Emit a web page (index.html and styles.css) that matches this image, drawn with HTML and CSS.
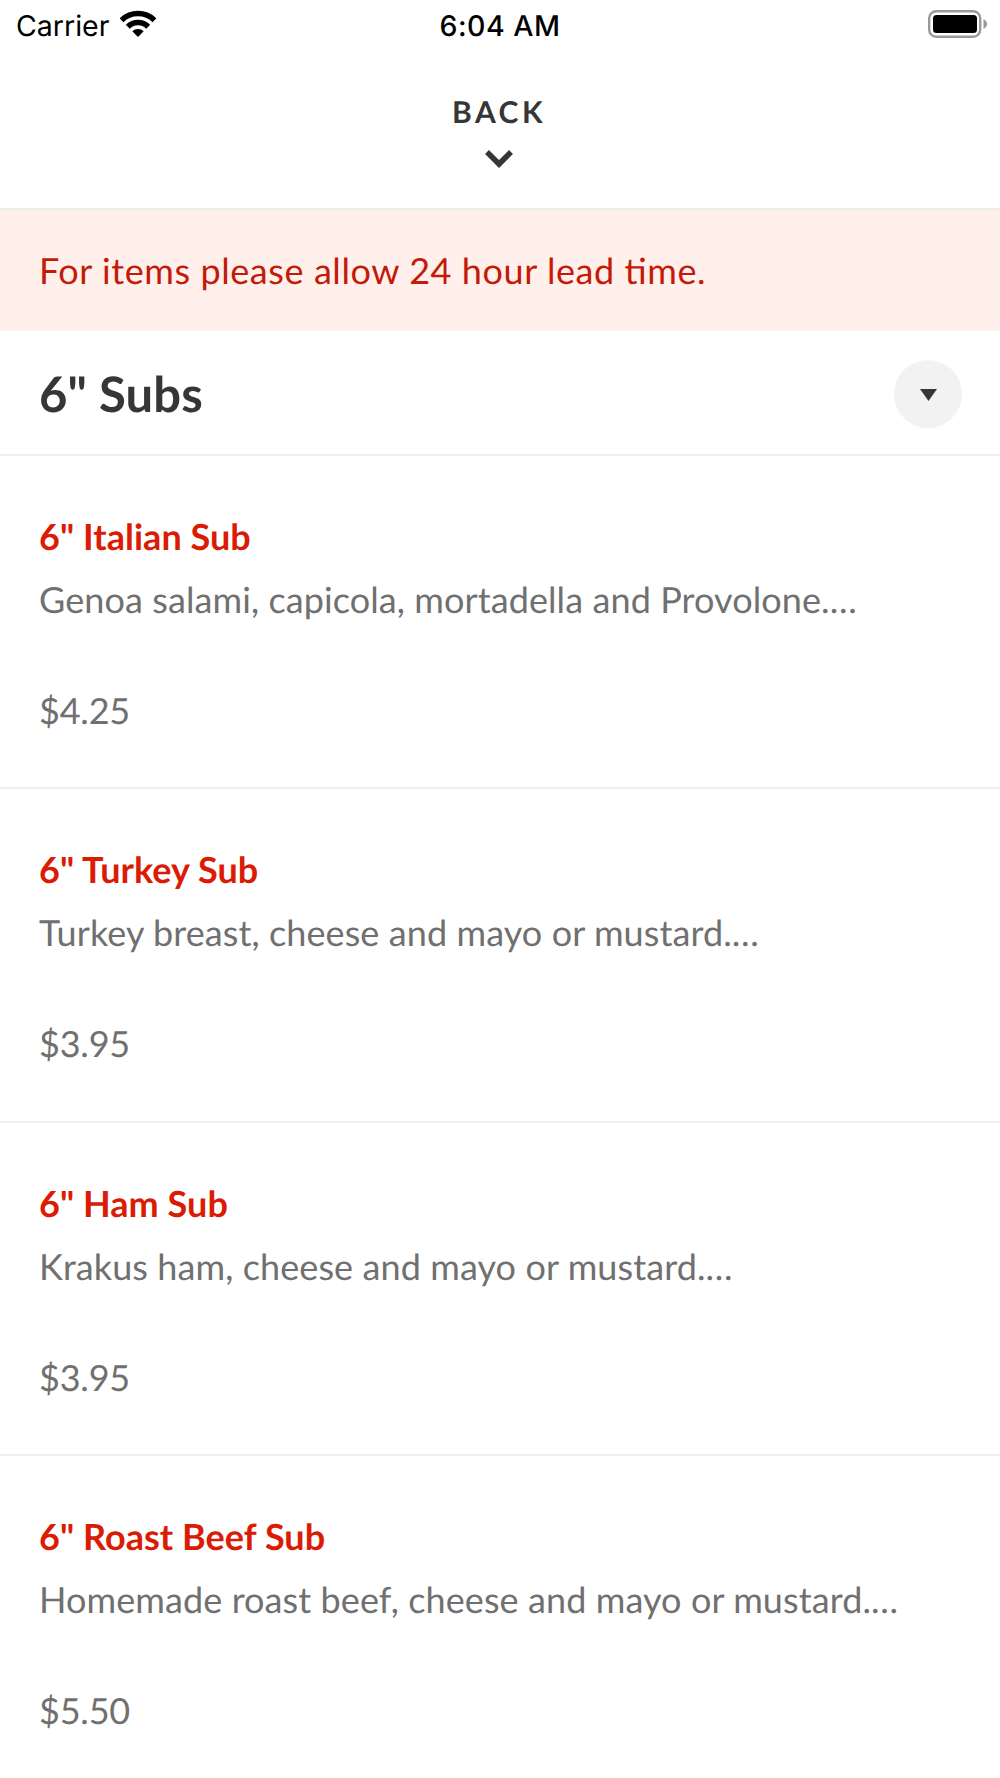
FILE: index.html
```html
<!DOCTYPE html>
<html lang="en">
<head>
<meta charset="utf-8">
<title>Menu</title>
<link rel="stylesheet" href="styles.css">
</head>
<body>
<header class="status">
  <div class="carrier"><span>Carrier</span>
    <svg class="wifi" width="36" height="28" viewBox="0 0 36 28"><path d="M18 27 12.300 21.300a8.300 8.300 0 0 1 11.400 0Z"/><path class="arc" d="M7.800 16.800a14.500 14.500 0 0 1 20.400 0M1.500 10.300a23.500 23.500 0 0 1 33 0"/></svg>
  </div>
  <div class="time">6:04 AM</div>
  <svg class="battery" width="59" height="28" viewBox="0 0 59 28"><rect class="shell" x="1.200" y="1.200" width="51" height="25.600" rx="7"/><rect x="5" y="5" width="44" height="18" rx="3.500"/><path class="tip" d="M55.500 9q3.500 2 3.500 5t-3.500 5Z"/></svg>
</header>
<nav class="back"><span>BACK</span>
  <svg width="30" height="20" viewBox="0 0 30 20"><path d="m3 3 12 12L27 3"/></svg>
</nav>
<div class="notice">For items please allow 24 hour lead time.</div>
<div class="section"><h1>6" Subs</h1><button class="toggle" aria-label="Sections"><svg width="17" height="12" viewBox="0 0 17 12"><path d="M0 0h17L8.500 12Z"/></svg></button></div>
<main>
  <article class="item"><h2>6" Italian Sub</h2><p class="desc">Genoa salami, capicola, mortadella and Provolone.…</p><p class="price">$4.25</p></article>
  <article class="item"><h2>6" Turkey Sub</h2><p class="desc">Turkey breast, cheese and mayo or mustard.…</p><p class="price">$3.95</p></article>
  <article class="item"><h2>6" Ham Sub</h2><p class="desc">Krakus ham, cheese and mayo or mustard.…</p><p class="price">$3.95</p></article>
  <article class="item"><h2>6" Roast Beef Sub</h2><p class="desc">Homemade roast beef, cheese and mayo or mustard.…</p><p class="price">$5.50</p></article>
</main>
</body>
</html>
```
FILE: styles.css
```css
* { box-sizing: border-box; margin: 0; }
body { width: 1000px; height: 1778px; overflow: hidden; background: #fff; font-family: Lato, sans-serif; color: #363636; text-rendering: geometricPrecision; }
.status { display: grid; grid-template-columns: 1fr auto 1fr; align-items: center; height: 50px; padding: 0 13px 0 16px; font: 28.500px/52px Inter, sans-serif; color: #000; }
.carrier { display: flex; align-items: center; gap: 11px; }
.wifi { margin-bottom: 4px; }
.time { padding-right: 3px; font-weight: 550; letter-spacing: 0.5px; }
.arc { fill: none; stroke: #000; stroke-width: 5.500; }
.battery { justify-self: end; margin-bottom: 4px; }
.shell { fill: none; stroke: #999; stroke-width: 2.400; }
.tip { fill: #999; }
.back { display: flex; flex-direction: column; align-items: center; height: 160px; padding: 44px 3px 0 0; border-bottom: 2px solid #eee; font-size: 30px; line-height: 36px; font-weight: 700; letter-spacing: 3.500px; }
.back span { margin-right: -1px; }
.back svg { margin-top: 19px; }
.back path { fill: none; stroke: #363636; stroke-width: 5.500; }
.notice { height: 121px; padding-left: 39px; background: #fff0ec; color: #c41a08; font-size: 36px; line-height: 121px; letter-spacing: 0.580px; font-feature-settings: "liga" 1; }
.section { display: flex; justify-content: space-between; align-items: center; height: 125px; padding: 2px 38.500px 0 39px; border-bottom: 2px solid #eee; }
h1 { font-size: 49px; line-height: 60px; letter-spacing: 0.100px; }
.toggle { display: grid; place-items: center; width: 68px; height: 68px; padding: 2px 0 0 2px; border: 0; border-radius: 50%; background: #f2f2f2; }
.toggle path { fill: #363636; }
.item { height: 333.300px; padding: 57px 39px 0; border-bottom: 2px solid #eee; }
h2 { color: #db1c05; font-size: 36px; line-height: 46px; letter-spacing: 0.040px; }
.desc, .price { color: #707070; font-size: 36px; line-height: 46px; white-space: nowrap; }
.desc { margin-top: 17px; letter-spacing: 0.090px; }
.price { margin-top: 65px; letter-spacing: -0.200px; }
```
